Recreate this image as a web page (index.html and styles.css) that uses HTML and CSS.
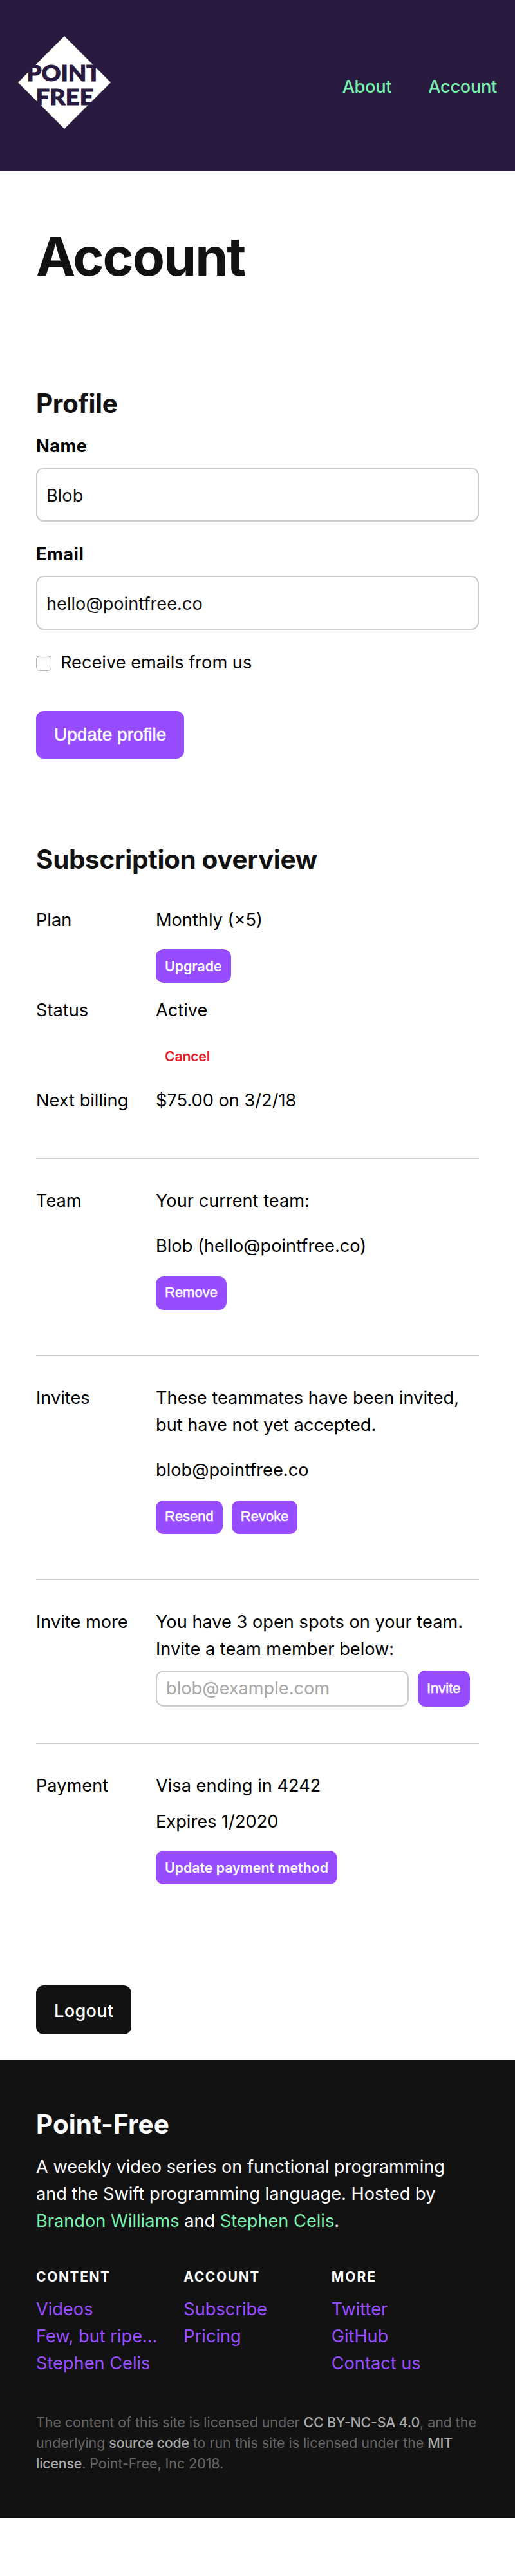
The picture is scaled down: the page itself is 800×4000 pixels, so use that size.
FILE: index.html
```html
<!DOCTYPE html>
<html lang="en">
<head>
<meta charset="utf-8">
<title>Account</title>
<link rel="stylesheet" href="styles.css">
</head>
<body>
<header class="header">
  <svg class="logo" width="144" height="144" viewBox="0 0 144 144" role="img" aria-label="Point-Free">
    <polygon class="logo-shape" points="72,0 144,72 72,144 0,72"/>
    <text class="logo-text" x="13.5" y="70.2" textLength="115" lengthAdjust="spacingAndGlyphs">POINT</text>
    <text class="logo-text" x="27.5" y="106.8" textLength="90" lengthAdjust="spacingAndGlyphs">FREE</text>
  </svg>
  <nav class="nav">
    <a href="#">About</a>
    <a href="#">Account</a>
  </nav>
</header>

<main class="main">
  <h1 class="title">Account</h1>

  <section class="profile">
    <h2 class="heading">Profile</h2>
    <form>
      <label class="label" for="name">Name</label>
      <input class="input" id="name" type="text" value="Blob">
      <label class="label label-next" for="email">Email</label>
      <input class="input" id="email" type="text" value="hello@pointfree.co">
      <label class="check-row"><input class="check" type="checkbox"><span>Receive emails from us</span></label>
      <button class="button button-native" type="button">Update profile</button>
    </form>
  </section>

  <section class="subscription">
    <h2 class="heading">Subscription overview</h2>

    <div class="group group-first">
      <div class="row">
        <p>Plan</p>
        <div><p>Monthly (×5)</p><a class="small after-text" href="#">Upgrade</a></div>
      </div>
      <div class="row">
        <p>Status</p>
        <div><p>Active</p><a class="small small-danger after-text" href="#">Cancel</a></div>
      </div>
      <div class="row">
        <p>Next billing</p>
        <div><p>$75.00 on 3/2/18</p></div>
      </div>
    </div>

    <div class="group">
      <div class="row">
        <p>Team</p>
        <div>
          <p>Your current team:</p>
          <p class="member">Blob (hello@pointfree.co)</p>
          <div class="actions"><button class="small small-native" type="button">Remove</button></div>
        </div>
      </div>
    </div>

    <div class="group">
      <div class="row">
        <p>Invites</p>
        <div>
          <p>These teammates have been invited, but have not yet accepted.</p>
          <p class="member">blob@pointfree.co</p>
          <div class="actions">
            <button class="small small-native" type="button">Resend</button>
            <button class="small small-native" type="button">Revoke</button>
          </div>
        </div>
      </div>
    </div>

    <div class="group group-invite">
      <div class="row">
        <p>Invite more</p>
        <div>
          <p>You have 3 open spots on your team. Invite a team member below:</p>
          <form class="invite">
            <input class="input input-invite" type="text" placeholder="blob@example.com">
            <button class="small small-native small-invite" type="button">Invite</button>
          </form>
        </div>
      </div>
    </div>

    <div class="group">
      <div class="row">
        <p>Payment</p>
        <div>
          <p>Visa ending in 4242</p>
          <p class="expires">Expires 1/2020</p>
          <a class="small after-text" href="#">Update payment method</a>
        </div>
      </div>
    </div>
  </section>

  <a class="button button-logout" href="#">Logout</a>
</main>

<footer class="footer">
  <h2 class="heading footer-heading">Point-Free</h2>
  <p class="about">A weekly video series on functional programming and the Swift programming language. Hosted by <a href="#">Brandon Williams</a> and <a href="#">Stephen Celis</a>.</p>
  <div class="columns">
    <div>
      <h3 class="column-title">Content</h3>
      <ul class="links"><li><a href="#">Videos</a></li><li><a href="#">Few, but ripe…</a></li><li><a href="#">Stephen Celis</a></li></ul>
    </div>
    <div>
      <h3 class="column-title">Account</h3>
      <ul class="links"><li><a href="#">Subscribe</a></li><li><a href="#">Pricing</a></li></ul>
    </div>
    <div>
      <h3 class="column-title column-title-wide">More</h3>
      <ul class="links"><li><a href="#">Twitter</a></li><li><a href="#">GitHub</a></li><li><a href="#">Contact us</a></li></ul>
    </div>
  </div>
  <p class="legal">The content of this site is licensed under <a href="#">CC BY-NC-SA 4.0</a>, and the underlying <a href="#">source code</a> to run this site is licensed under the <a href="#">MIT license</a>. Point-Free, Inc 2018.</p>
</footer>
</body>
</html>
```
FILE: styles.css
```css
* { box-sizing: border-box; margin: 0; padding: 0; }

body {
  background: #fff;
  color: #000;
  font-family: Inter, "Liberation Sans", sans-serif;
  font-size: 27.2px;
  line-height: 42px;
}

a { text-decoration: none; }

.header {
  display: flex;
  align-items: center;
  justify-content: space-between;
  height: 266px;
  padding: 0 28px;
  background: #291a40;
}
.logo { display: block; margin-bottom: 10px; }
.logo-shape { fill: #fff; }
.logo-text {
  fill: #291a40;
  stroke: #291a40;
  stroke-width: 1px;
  font-family: Lato, sans-serif;
  font-size: 33.8px;
  font-weight: 900;
}

.nav { display: flex; gap: 57px; padding-top: 4px; }
.nav a { color: #79f2b0; font-weight: 500; letter-spacing: -0.3px; }

.main { padding: 83px 56px 39px; }
.title {
  color: #121212;
  font-size: 82px;
  font-weight: 700;
  letter-spacing: -2px;
  line-height: 100px;
}
.heading {
  color: #121212;
  font-size: 40.5px;
  font-weight: 700;
  letter-spacing: -0.38px;
  line-height: 48px;
}

.profile { margin-top: 154px; }
.label { display: block; margin-top: 21px; font-weight: 700; letter-spacing: 0.5px; }
.label-next { margin-top: 30px; }
.input {
  display: block;
  width: 100%;
  height: 84px;
  margin-top: 12px;
  padding: 2px 14px 0;
  border: 2px solid #ccc;
  border-radius: 12px;
  background: #fff;
  color: #121212;
  font: inherit;
}
.input::placeholder { color: #a9a9a9; opacity: 1; }
.check-row { display: flex; align-items: center; gap: 14px; margin-top: 30px; }
.check {
  appearance: none;
  width: 24px;
  height: 24px;
  margin-top: 2px;
  border: 1px solid #b4b4b4;
  border-top-color: #999;
  border-radius: 6px;
  background: linear-gradient(#f0f0f0, #fff 40%);
}

.button {
  display: block;
  width: fit-content;
  padding: 0 28px;
  border: 0;
  border-radius: 12px;
  color: #fff;
  font-weight: 500;
}
.button-native {
  height: 74px;
  margin-top: 54px;
  background: #974dff;
  font-family: "Liberation Sans", Arial, sans-serif;
  font-size: 28px;
  -webkit-text-stroke: 0.5px #fff;
}
.button-logout {
  height: 76px;
  margin-top: 157px;
  padding-top: 2px;
  background: #121212;
  letter-spacing: 0.3px;
  line-height: 76px;
}

.subscription { margin-top: 133px; }
.group { padding-top: 44px; border-top: 2px solid #ccc; margin-top: 70px; }
.group-first { padding-top: 0; border-top: 0; margin: 49px 0 68px; }
.group-first + .group { margin-top: 0; }
.group-invite + .group { margin-top: 56px; }
.row { display: grid; grid-template-columns: 186px 1fr; }
.row + .row { margin-top: 22px; }
.member { margin-top: 28px; }
.expires { margin-top: 14px; }

.small {
  display: block;
  width: fit-content;
  height: 52px;
  padding: 0 14px;
  border: 0;
  border-radius: 12px;
  background: #974dff;
  color: #fff;
  font-size: 21.3px;
  font-weight: 600;
  line-height: 52px;
}
.small-danger { background: transparent; color: #eb1c26; letter-spacing: -0.25px; }
.small-native {
  padding-bottom: 3px;
  font-family: "Liberation Sans", Arial, sans-serif;
  font-size: 22px;
  font-weight: 500;
  line-height: 49px;
  -webkit-text-stroke: 0.5px #fff;
}
.after-text { margin-top: 24px; }
.actions { display: flex; gap: 14px; margin-top: 26px; }

.invite { display: flex; gap: 14px; margin-top: 12px; }
.input-invite { width: 393px; height: 56px; margin-top: 0; padding: 0 14px 2px; }
.small-invite { height: 56px; padding-bottom: 2px; }

.footer { padding: 77px 56px 69px; background: #121212; color: #fff; }
.footer-heading { color: #fff; letter-spacing: 0; }
.about { max-width: 670px; margin-top: 21px; }
.about a { color: #79f2b0; }
.columns { display: grid; grid-template-columns: repeat(3, 1fr); margin-top: 50px; }
.column-title {
  font-size: 21px;
  font-weight: 700;
  letter-spacing: 1.6px;
  line-height: 32px;
  text-transform: uppercase;
}
.column-title-wide { letter-spacing: 2.1px; }
.links { margin-top: 13px; list-style: none; }
.links a { color: #974dff; }
.legal { margin-top: 54px; color: #666; font-size: 21.36px; line-height: 32px; }
.legal a { color: #a8a8a8; font-weight: 500; letter-spacing: -0.2px; }
```
